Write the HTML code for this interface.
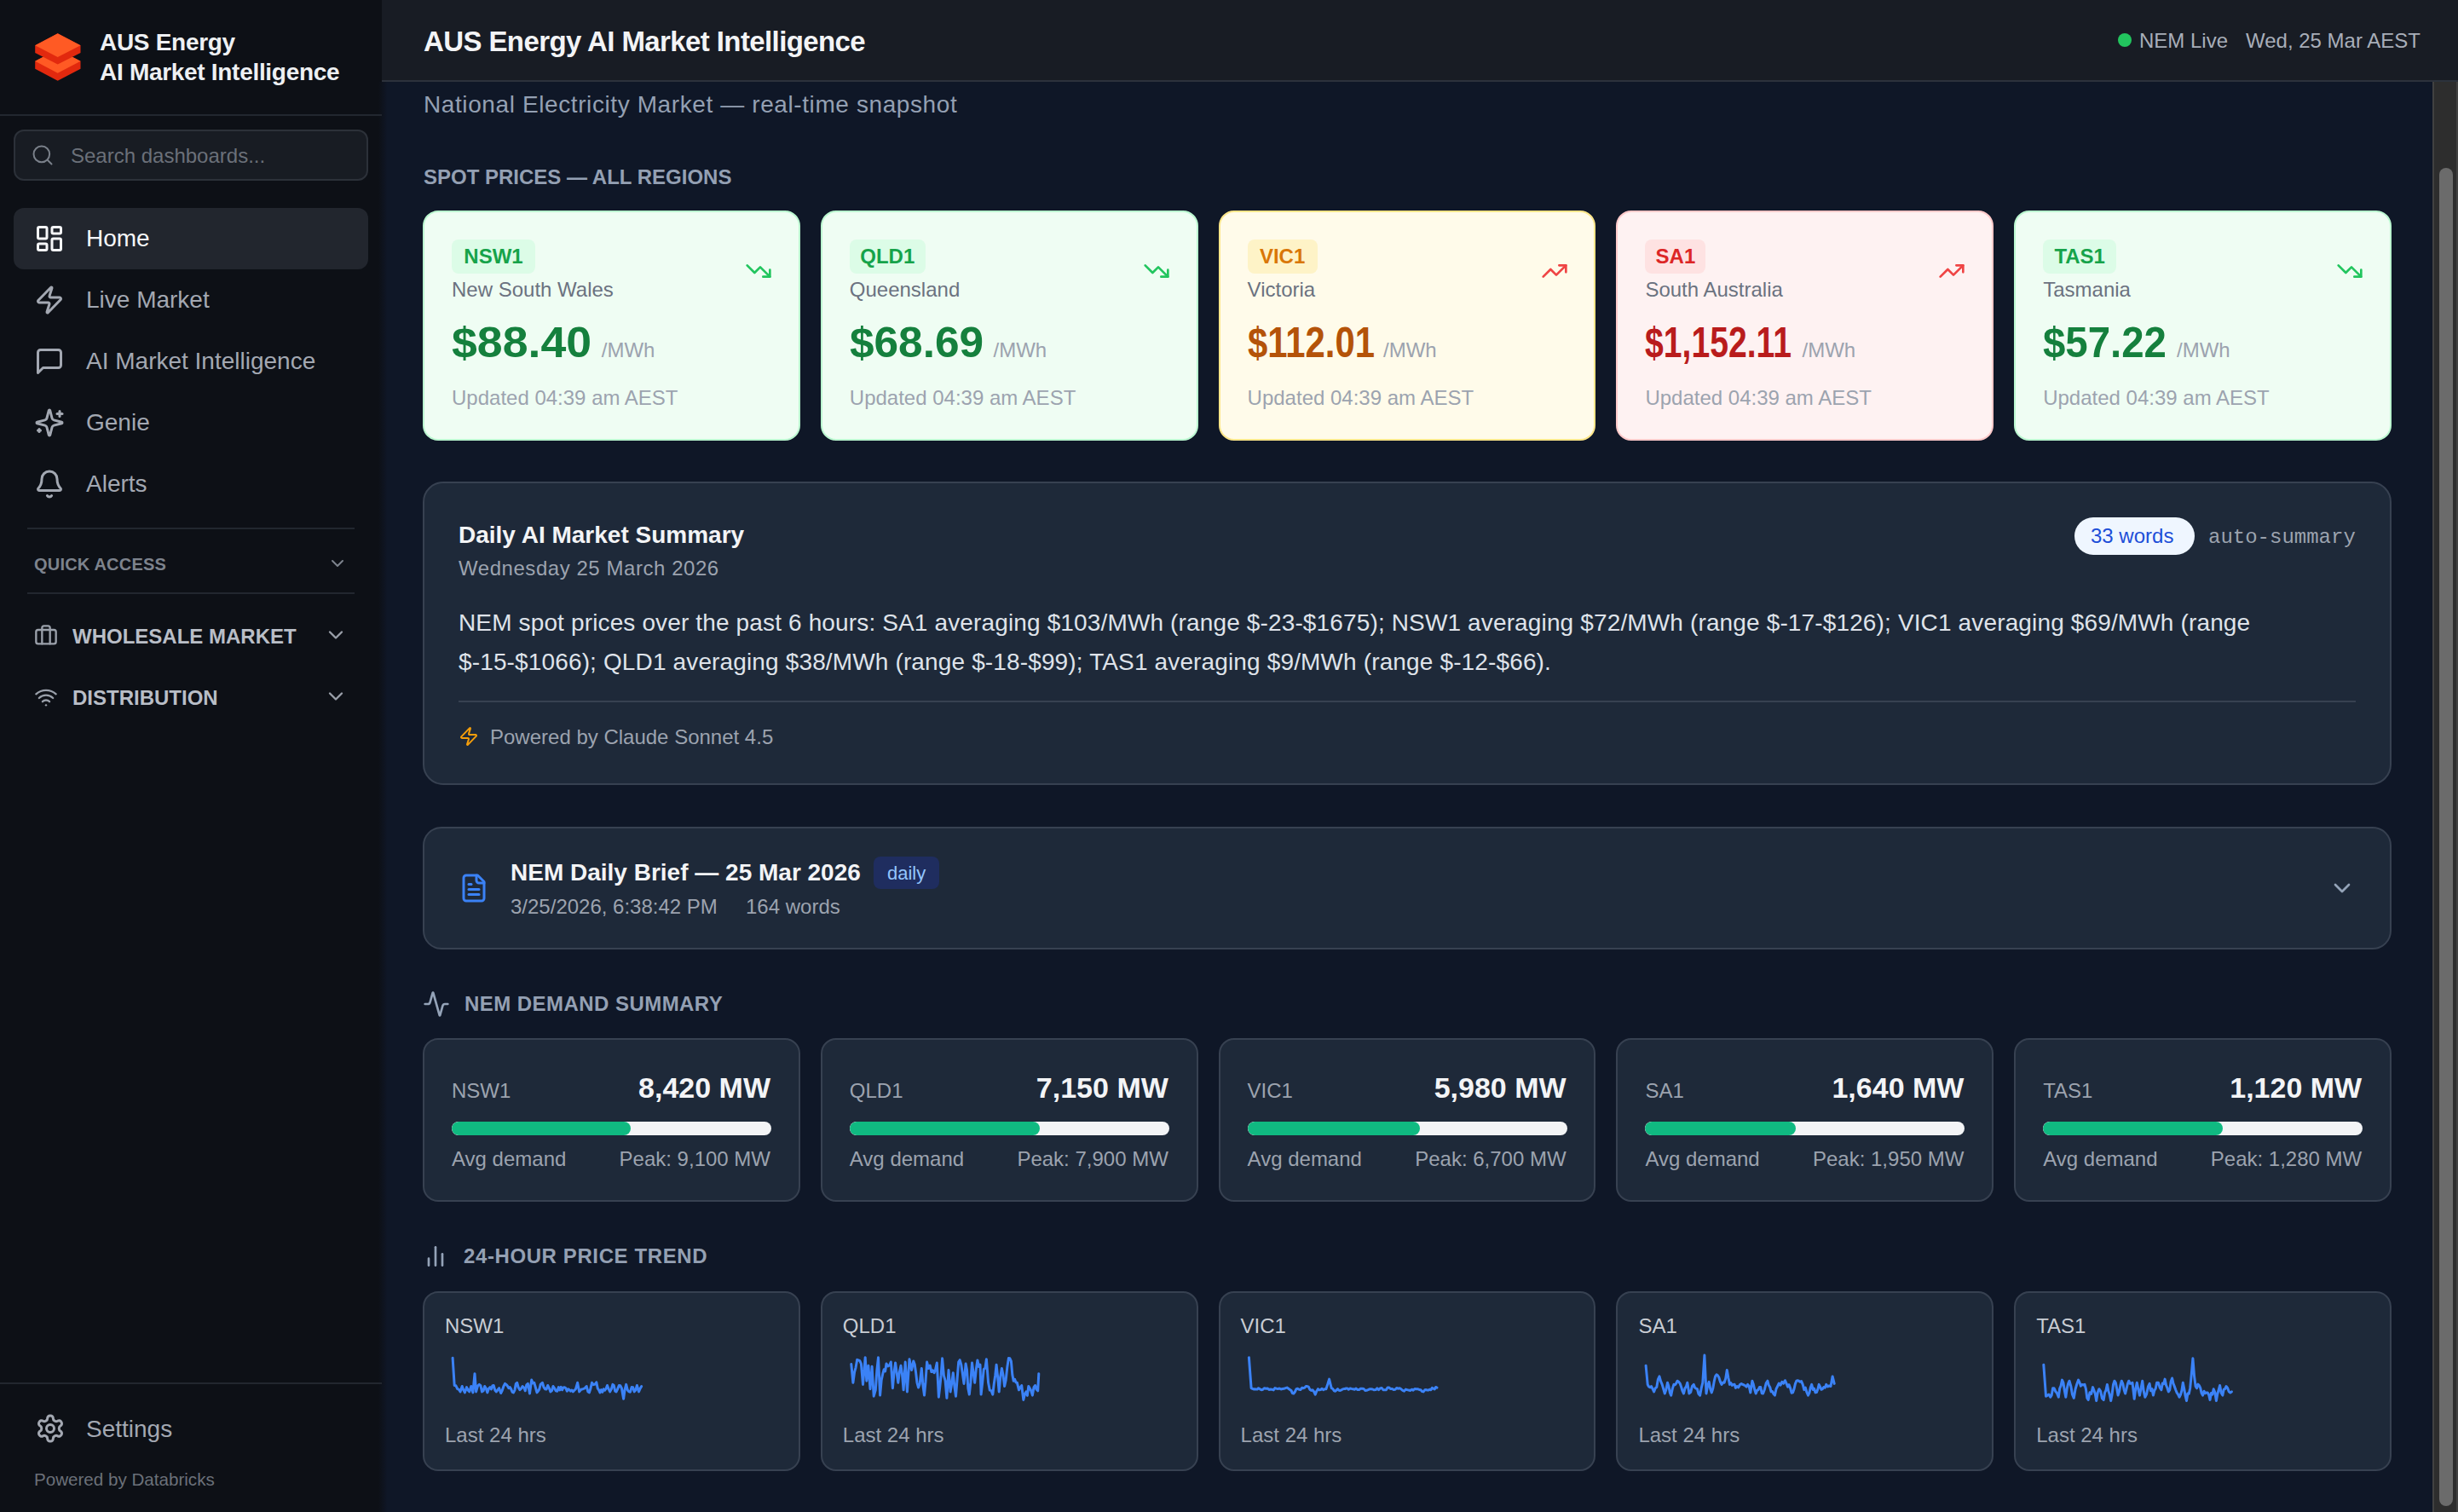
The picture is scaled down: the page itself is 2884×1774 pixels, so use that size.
<!DOCTYPE html>
<html><head><meta charset="utf-8">
<style>
*{box-sizing:border-box;margin:0;padding:0}
html,body{width:2884px;height:1774px;overflow:hidden;background:#0f1727;font-family:"Liberation Sans",sans-serif}
.abs{position:absolute}
.t{position:absolute;white-space:nowrap}
svg.i{position:absolute;fill:none;stroke:currentColor;stroke-linecap:round;stroke-linejoin:round;overflow:visible}
.card{position:absolute;background:#1e2939;border:2px solid #374151;}
</style></head><body>
<div class="abs" style="left:448px;top:96px;width:2406px;height:1678px;background:#0f1727"></div>
<div class="abs" style="left:448px;top:0;width:2436px;height:96px;background:#181c24;border-bottom:2px solid #2c323c"></div>
<div class="t" style="left:497px;top:32px;font-size:33px;line-height:33px;font-weight:700;color:#f3f4f6;letter-spacing:-0.6px">AUS Energy AI Market Intelligence</div>
<div class="abs" style="left:2485px;top:39px;width:16px;height:16px;border-radius:8px;background:#22c55e"></div>
<div class="t" style="left:2510px;top:36px;font-size:24px;line-height:24px;font-weight:400;color:#a8aeb9;">NEM Live</div>
<div class="t" style="left:2635px;top:36px;font-size:24px;line-height:24px;font-weight:400;color:#a8aeb9;">Wed, 25 Mar AEST</div>
<div class="abs" style="left:2854px;top:96px;width:30px;height:1678px;background:#2d2d2d;border-left:2px solid #414141;border-right:2px solid #414141"></div>
<div class="abs" style="left:2862px;top:197px;width:16px;height:1570px;border-radius:8px;background:#6b6b6b"></div>
<div class="abs" style="left:0;top:0;width:448px;height:1774px;background:#0d1016"></div>
<svg class="abs" style="left:0;top:0" width="120" height="120">
<polygon points="41.2,71.8 67.7,57.8 94.5,71.8 94.5,80.8 67.7,94.7 41.2,80.8" fill="#e2290e"/>
<polygon points="41.2,71.8 67.7,57.8 94.5,71.8 67.7,85.7" fill="#ff5a24"/>
<polygon points="41.2,53.3 67.7,39.2 94.5,53.3 94.5,61.9 67.7,75.6 41.2,61.9" fill="#e2290e"/>
<polygon points="41.2,53.3 67.7,39.2 94.5,53.3 67.7,67.1" fill="#ff5a24"/>
</svg>
<div class="abs" style="left:444px;top:96px;width:10px;height:1678px;background:linear-gradient(to right,#0d1016,#0f1626)"></div>
<div class="t" style="left:117px;top:36px;font-size:28px;line-height:28px;font-weight:700;color:#eef0f3;letter-spacing:-0.3px">AUS Energy</div>
<div class="t" style="left:117px;top:71px;font-size:28px;line-height:28px;font-weight:700;color:#eef0f3;letter-spacing:-0.3px">AI Market Intelligence</div>
<div class="abs" style="left:0;top:134px;width:448px;height:2px;background:#22272f"></div>
<div class="abs" style="left:16px;top:152px;width:416px;height:60px;border-radius:12px;background:#181c23;border:2px solid #2c3139"></div>
<svg class="i" style="left:36px;top:168px;color:#7a808a;" width="28" height="28" viewBox="0 0 24 24" stroke-width="1.7"><circle cx="11" cy="11" r="8"/><path d="m21 21-4.3-4.3"/></svg>
<div class="t" style="left:83px;top:171px;font-size:24px;line-height:24px;font-weight:400;color:#6b7079;">Search dashboards...</div>
<div class="abs" style="left:16px;top:244px;width:416px;height:72px;border-radius:12px;background:#22262e"></div>
<svg class="i" style="left:40px;top:262px;color:#f5f6f8;" width="36" height="36" viewBox="0 0 24 24" stroke-width="2"><rect width="7" height="9" x="3" y="3" rx="1"/><rect width="7" height="5" x="14" y="3" rx="1"/><rect width="7" height="9" x="14" y="12" rx="1"/><rect width="7" height="5" x="3" y="16" rx="1"/></svg>
<div class="t" style="left:101px;top:266px;font-size:28px;line-height:28px;font-weight:400;color:#f5f6f8;">Home</div>
<svg class="i" style="left:40px;top:334px;color:#a3a8b2;" width="36" height="36" viewBox="0 0 24 24" stroke-width="2"><path d="M4 14a1 1 0 0 1-.78-1.63l9.9-10.2a.5.5 0 0 1 .86.46l-1.92 6.02A1 1 0 0 0 13 10h7a1 1 0 0 1 .78 1.63l-9.9 10.2a.5.5 0 0 1-.86-.46l1.92-6.02A1 1 0 0 0 11 14z"/></svg>
<div class="t" style="left:101px;top:338px;font-size:28px;line-height:28px;font-weight:400;color:#a3a8b2;">Live Market</div>
<svg class="i" style="left:40px;top:406px;color:#a3a8b2;" width="36" height="36" viewBox="0 0 24 24" stroke-width="2"><path d="M21 15a2 2 0 0 1-2 2H7l-4 4V5a2 2 0 0 1 2-2h14a2 2 0 0 1 2 2z"/></svg>
<div class="t" style="left:101px;top:410px;font-size:28px;line-height:28px;font-weight:400;color:#a3a8b2;">AI Market Intelligence</div>
<svg class="i" style="left:40px;top:478px;color:#a3a8b2;" width="36" height="36" viewBox="0 0 24 24" stroke-width="2"><path d="M9.937 15.5A2 2 0 0 0 8.5 14.063l-6.135-1.582a.5.5 0 0 1 0-.962L8.5 9.936A2 2 0 0 0 9.937 8.5l1.582-6.135a.5.5 0 0 1 .963 0L14.063 8.5A2 2 0 0 0 15.5 9.937l6.135 1.581a.5.5 0 0 1 0 .964L15.5 14.063a2 2 0 0 0-1.437 1.437l-1.582 6.135a.5.5 0 0 1-.963 0z"/><path d="M20 3v4"/><path d="M22 5h-4"/><path d="M4 17v2"/><path d="M5 18H3"/></svg>
<div class="t" style="left:101px;top:482px;font-size:28px;line-height:28px;font-weight:400;color:#a3a8b2;">Genie</div>
<svg class="i" style="left:40px;top:550px;color:#a3a8b2;" width="36" height="36" viewBox="0 0 24 24" stroke-width="2"><path d="M10.268 21a2 2 0 0 0 3.464 0"/><path d="M3.262 15.326A1 1 0 0 0 4 17h16a1 1 0 0 0 .74-1.673C19.41 13.956 18 12.499 18 8A6 6 0 0 0 6 8c0 4.499-1.411 5.956-2.738 7.326"/></svg>
<div class="t" style="left:101px;top:554px;font-size:28px;line-height:28px;font-weight:400;color:#a3a8b2;">Alerts</div>
<div class="abs" style="left:32px;top:619px;width:384px;height:2px;background:#22272f"></div>
<div class="t" style="left:40px;top:652px;font-size:20px;line-height:20px;font-weight:700;color:#7d838d;letter-spacing:0.2px">QUICK ACCESS</div>
<svg class="i" style="left:384px;top:649px;color:#7d838d;" width="24" height="24" viewBox="0 0 24 24" stroke-width="2"><path d="m6 9 6 6 6-6"/></svg>
<div class="abs" style="left:32px;top:695px;width:384px;height:2px;background:#22272f"></div>
<svg class="i" style="left:40px;top:732px;color:#9aa0aa;" width="28" height="28" viewBox="0 0 24 24" stroke-width="2"><path d="M16 20V4a2 2 0 0 0-2-2h-4a2 2 0 0 0-2 2v16"/><rect width="20" height="14" x="2" y="6" rx="2"/></svg>
<div class="t" style="left:85px;top:735px;font-size:24px;line-height:24px;font-weight:700;color:#b9bec7;">WHOLESALE MARKET</div>
<svg class="i" style="left:380px;top:731px;color:#9aa0aa;" width="28" height="28" viewBox="0 0 24 24" stroke-width="2"><path d="m6 9 6 6 6-6"/></svg>
<svg class="i" style="left:40px;top:804px;color:#9aa0aa;" width="28" height="28" viewBox="0 0 24 24" stroke-width="2"><path d="M12 20h.01"/><path d="M2 8.82a15 15 0 0 1 20 0"/><path d="M5 12.859a10 10 0 0 1 14 0"/><path d="M8.5 16.429a5 5 0 0 1 7 0"/></svg>
<div class="t" style="left:85px;top:807px;font-size:24px;line-height:24px;font-weight:700;color:#b9bec7;">DISTRIBUTION</div>
<svg class="i" style="left:380px;top:803px;color:#9aa0aa;" width="28" height="28" viewBox="0 0 24 24" stroke-width="2"><path d="m6 9 6 6 6-6"/></svg>
<div class="abs" style="left:0;top:1622px;width:448px;height:2px;background:#22272f"></div>
<svg class="i" style="left:41px;top:1658px;color:#a3a8b2;" width="36" height="36" viewBox="0 0 24 24" stroke-width="2"><path d="M12.22 2h-.44a2 2 0 0 0-2 2v.18a2 2 0 0 1-1 1.73l-.43.25a2 2 0 0 1-2 0l-.15-.08a2 2 0 0 0-2.73.73l-.22.38a2 2 0 0 0 .73 2.73l.15.1a2 2 0 0 1 1 1.72v.51a2 2 0 0 1-1 1.74l-.15.09a2 2 0 0 0-.73 2.73l.22.38a2 2 0 0 0 2.73.73l.15-.08a2 2 0 0 1 2 0l.43.25a2 2 0 0 1 1 1.73V20a2 2 0 0 0 2 2h.44a2 2 0 0 0 2-2v-.18a2 2 0 0 1 1-1.73l.43-.25a2 2 0 0 1 2 0l.15.08a2 2 0 0 0 2.73-.73l.22-.39a2 2 0 0 0-.73-2.73l-.15-.08a2 2 0 0 1-1-1.74v-.5a2 2 0 0 1 1-1.74l.15-.09a2 2 0 0 0 .73-2.73l-.22-.38a2 2 0 0 0-2.73-.73l-.15.08a2 2 0 0 1-2 0l-.43-.25a2 2 0 0 1-1-1.73V4a2 2 0 0 0-2-2z"/><circle cx="12" cy="12" r="3"/></svg>
<div class="t" style="left:101px;top:1663px;font-size:28px;line-height:28px;font-weight:400;color:#a3a8b2;">Settings</div>
<div class="t" style="left:40px;top:1726px;font-size:20px;line-height:20px;font-weight:400;color:#6b7079;font-size:20.6px">Powered by Databricks</div>
<div class="t" style="left:497px;top:109px;font-size:28px;line-height:28px;font-weight:400;color:#94a0b3;letter-spacing:0.6px">National Electricity Market — real-time snapshot</div>
<div class="t" style="left:497px;top:196px;font-size:24px;line-height:24px;font-weight:700;color:#94a0b3;">SPOT PRICES — ALL REGIONS</div>
<div class="abs" style="left:496.0px;top:247px;width:442.8px;height:270px;border-radius:18px;background:#effdf3;border:2px solid #bbf7d0"></div>
<div class="abs" style="left:530.0px;top:281px;height:40px;width:98px;text-align:center;border-radius:8px;background:#dcfce7;font-size:24px;line-height:40px;font-weight:700;color:#16a34a;white-space:nowrap">NSW1</div>
<div class="t" style="left:530.0px;top:328px;font-size:24px;line-height:24px;font-weight:400;color:#6b7280;">New South Wales</div>
<div class="t" style="left:530.0px;top:377px;font-size:50px;line-height:50px;font-weight:700;color:#15803d;transform:scaleX(1.073);transform-origin:0 0">$88.40</div>
<div class="t" style="left:705.8px;top:399px;font-size:24px;line-height:24px;font-weight:400;color:#9ca3af;">/MWh</div>
<div class="t" style="left:530.0px;top:455px;font-size:24px;line-height:24px;font-weight:400;color:#9ca3af;">Updated 04:39 am AEST</div>
<svg class="i" style="left:874.0px;top:302px;color:#22c55e;" width="32" height="32" viewBox="0 0 24 24" stroke-width="2"><polyline points="22 17 13.5 8.5 8.5 13.5 2 7"/><polyline points="16 17 22 17 22 11"/></svg>
<div class="abs" style="left:962.8px;top:247px;width:442.8px;height:270px;border-radius:18px;background:#effdf3;border:2px solid #bbf7d0"></div>
<div class="abs" style="left:996.8px;top:281px;height:40px;width:89px;text-align:center;border-radius:8px;background:#dcfce7;font-size:24px;line-height:40px;font-weight:700;color:#16a34a;white-space:nowrap">QLD1</div>
<div class="t" style="left:996.8px;top:328px;font-size:24px;line-height:24px;font-weight:400;color:#6b7280;">Queensland</div>
<div class="t" style="left:996.8px;top:377px;font-size:50px;line-height:50px;font-weight:700;color:#15803d;transform:scaleX(1.027);transform-origin:0 0">$68.69</div>
<div class="t" style="left:1165.5px;top:399px;font-size:24px;line-height:24px;font-weight:400;color:#9ca3af;">/MWh</div>
<div class="t" style="left:996.8px;top:455px;font-size:24px;line-height:24px;font-weight:400;color:#9ca3af;">Updated 04:39 am AEST</div>
<svg class="i" style="left:1340.8px;top:302px;color:#22c55e;" width="32" height="32" viewBox="0 0 24 24" stroke-width="2"><polyline points="22 17 13.5 8.5 8.5 13.5 2 7"/><polyline points="16 17 22 17 22 11"/></svg>
<div class="abs" style="left:1429.6px;top:247px;width:442.8px;height:270px;border-radius:18px;background:#fffbea;border:2px solid #fde68a"></div>
<div class="abs" style="left:1463.6px;top:281px;height:40px;width:82px;text-align:center;border-radius:8px;background:#fef3c7;font-size:24px;line-height:40px;font-weight:700;color:#d97706;white-space:nowrap">VIC1</div>
<div class="t" style="left:1463.6px;top:328px;font-size:24px;line-height:24px;font-weight:400;color:#6b7280;">Victoria</div>
<div class="t" style="left:1463.6px;top:377px;font-size:50px;line-height:50px;font-weight:700;color:#b45309;transform:scaleX(0.837);transform-origin:0 0">$112.01</div>
<div class="t" style="left:1623px;top:399px;font-size:24px;line-height:24px;font-weight:400;color:#9ca3af;">/MWh</div>
<div class="t" style="left:1463.6px;top:455px;font-size:24px;line-height:24px;font-weight:400;color:#9ca3af;">Updated 04:39 am AEST</div>
<svg class="i" style="left:1807.6px;top:302px;color:#ef4444;" width="32" height="32" viewBox="0 0 24 24" stroke-width="2"><polyline points="22 7 13.5 15.5 8.5 10.5 2 17"/><polyline points="16 7 22 7 22 13"/></svg>
<div class="abs" style="left:1896.4px;top:247px;width:442.8px;height:270px;border-radius:18px;background:#fef2f2;border:2px solid #fecaca"></div>
<div class="abs" style="left:1930.4px;top:281px;height:40px;width:71px;text-align:center;border-radius:8px;background:#fee2e2;font-size:24px;line-height:40px;font-weight:700;color:#dc2626;white-space:nowrap">SA1</div>
<div class="t" style="left:1930.4px;top:328px;font-size:24px;line-height:24px;font-weight:400;color:#6b7280;">South Australia</div>
<div class="t" style="left:1930.4px;top:377px;font-size:50px;line-height:50px;font-weight:700;color:#b91c1c;transform:scaleX(0.783);transform-origin:0 0">$1,152.11</div>
<div class="t" style="left:2114.5px;top:399px;font-size:24px;line-height:24px;font-weight:400;color:#9ca3af;">/MWh</div>
<div class="t" style="left:1930.4px;top:455px;font-size:24px;line-height:24px;font-weight:400;color:#9ca3af;">Updated 04:39 am AEST</div>
<svg class="i" style="left:2274.4px;top:302px;color:#ef4444;" width="32" height="32" viewBox="0 0 24 24" stroke-width="2"><polyline points="22 7 13.5 15.5 8.5 10.5 2 17"/><polyline points="16 7 22 7 22 13"/></svg>
<div class="abs" style="left:2363.2px;top:247px;width:442.8px;height:270px;border-radius:18px;background:#effdf3;border:2px solid #bbf7d0"></div>
<div class="abs" style="left:2397.2px;top:281px;height:40px;width:86px;text-align:center;border-radius:8px;background:#dcfce7;font-size:24px;line-height:40px;font-weight:700;color:#16a34a;white-space:nowrap">TAS1</div>
<div class="t" style="left:2397.2px;top:328px;font-size:24px;line-height:24px;font-weight:400;color:#6b7280;">Tasmania</div>
<div class="t" style="left:2397.2px;top:377px;font-size:50px;line-height:50px;font-weight:700;color:#15803d;transform:scaleX(0.948);transform-origin:0 0">$57.22</div>
<div class="t" style="left:2554px;top:399px;font-size:24px;line-height:24px;font-weight:400;color:#9ca3af;">/MWh</div>
<div class="t" style="left:2397.2px;top:455px;font-size:24px;line-height:24px;font-weight:400;color:#9ca3af;">Updated 04:39 am AEST</div>
<svg class="i" style="left:2741.2px;top:302px;color:#22c55e;" width="32" height="32" viewBox="0 0 24 24" stroke-width="2"><polyline points="22 17 13.5 8.5 8.5 13.5 2 7"/><polyline points="16 17 22 17 22 11"/></svg>
<div class="card" style="left:496px;top:565px;width:2310px;height:356px;border-radius:24px"></div>
<div class="t" style="left:538px;top:614px;font-size:28px;line-height:28px;font-weight:700;color:#f3f4f6;">Daily AI Market Summary</div>
<div class="t" style="left:538px;top:655px;font-size:24px;line-height:24px;font-weight:400;color:#9ca3af;letter-spacing:0.55px">Wednesday 25 March 2026</div>
<div class="abs" style="left:538px;top:708px;width:2226px;font-size:28px;line-height:46px;letter-spacing:0.14px;color:#dfe3ea">NEM spot prices over the past 6 hours: SA1 averaging $103/MWh (range $-23-$1675); NSW1 averaging $72/MWh (range $-17-$126); VIC1 averaging $69/MWh (range $-15-$1066); QLD1 averaging $38/MWh (range $-18-$99); TAS1 averaging $9/MWh (range $-12-$66).</div>
<div class="abs" style="left:538px;top:822px;width:2226px;height:2px;background:#374151"></div>
<svg class="i" style="left:538px;top:852px;color:#f59e0b;" width="24" height="24" viewBox="0 0 24 24" stroke-width="2"><path d="M4 14a1 1 0 0 1-.78-1.63l9.9-10.2a.5.5 0 0 1 .86.46l-1.92 6.02A1 1 0 0 0 13 10h7a1 1 0 0 1 .78 1.63l-9.9 10.2a.5.5 0 0 1-.86-.46l1.92-6.02A1 1 0 0 0 11 14z"/></svg>
<div class="t" style="left:575px;top:853px;font-size:24px;line-height:24px;font-weight:400;color:#9ca3af;">Powered by Claude Sonnet 4.5</div>
<div class="abs" style="left:2434px;top:607px;width:141px;height:44px;border-radius:22px;background:#eff6ff"></div>
<div class="t" style="left:2453px;top:617px;font-size:24px;line-height:24px;font-weight:400;color:#1d4ed8;">33 words</div>
<div class="t" style="left:2591px;top:619px;font-size:24px;line-height:24px;font-weight:400;color:#9ca3af;font-family:'Liberation Mono',monospace">auto-summary</div>
<div class="card" style="left:496px;top:970px;width:2310px;height:144px;border-radius:22px"></div>
<svg class="i" style="left:537.5px;top:1023.5px;color:#3b82f6;" width="36" height="36" viewBox="0 0 24 24" stroke-width="2"><path d="M15 2H6a2 2 0 0 0-2 2v16a2 2 0 0 0 2 2h12a2 2 0 0 0 2-2V7Z"/><path d="M14 2v4a2 2 0 0 0 2 2h4"/><path d="M10 9H8"/><path d="M16 13H8"/><path d="M16 17H8"/></svg>
<div class="t" style="left:599px;top:1010px;font-size:28px;line-height:28px;font-weight:700;color:#f3f4f6;">NEM Daily Brief — 25 Mar 2026</div>
<div class="abs" style="left:1025px;top:1005px;width:77px;height:38px;border-radius:8px;background:#1f2d5f"></div>
<div class="t" style="left:1041px;top:1014px;font-size:22px;line-height:22px;font-weight:400;color:#93c5fd;">daily</div>
<div class="t" style="left:599px;top:1052px;font-size:24px;line-height:24px;font-weight:400;color:#9ca3af;">3/25/2026, 6:38:42 PM</div>
<div class="t" style="left:875px;top:1052px;font-size:24px;line-height:24px;font-weight:400;color:#9ca3af;">164 words</div>
<svg class="i" style="left:2732px;top:1026px;color:#94a3b8;" width="32" height="32" viewBox="0 0 24 24" stroke-width="2"><path d="m6 9 6 6 6-6"/></svg>
<svg class="i" style="left:496px;top:1162px;color:#94a3b8;" width="32" height="32" viewBox="0 0 24 24" stroke-width="2"><path d="M22 12h-2.48a2 2 0 0 0-1.93 1.46l-2.35 8.36a.25.25 0 0 1-.48 0L9.24 2.18a.25.25 0 0 0-.48 0l-2.35 8.36A2 2 0 0 1 4.49 12H2"/></svg>
<div class="t" style="left:545px;top:1166px;font-size:24px;line-height:24px;font-weight:700;color:#94a0b3;letter-spacing:0.45px">NEM DEMAND SUMMARY</div>
<div class="card" style="left:496.0px;top:1218px;width:442.8px;height:192px;border-radius:18px"></div>
<div class="t" style="left:530.0px;top:1268px;font-size:24px;line-height:24px;font-weight:400;color:#9ca3af;">NSW1</div>
<div class="t" style="right:1980.0px;top:1259px;font-size:34px;line-height:34px;font-weight:700;color:#f3f4f6;">8,420 MW</div>
<div class="abs" style="left:530.0px;top:1316px;width:375px;height:16px;border-radius:8px;background:#f3f4f6;overflow:hidden"><div style="width:55.9%;height:100%;background:#10b981;border-radius:8px"></div></div>
<div class="t" style="left:530.0px;top:1348px;font-size:24px;line-height:24px;font-weight:400;color:#9ca3af;">Avg demand</div>
<div class="t" style="right:1980.0px;top:1348px;font-size:24px;line-height:24px;font-weight:400;color:#9ca3af;">Peak: 9,100 MW</div>
<div class="card" style="left:962.8px;top:1218px;width:442.8px;height:192px;border-radius:18px"></div>
<div class="t" style="left:996.8px;top:1268px;font-size:24px;line-height:24px;font-weight:400;color:#9ca3af;">QLD1</div>
<div class="t" style="right:1513.2px;top:1259px;font-size:34px;line-height:34px;font-weight:700;color:#f3f4f6;">7,150 MW</div>
<div class="abs" style="left:996.8px;top:1316px;width:375px;height:16px;border-radius:8px;background:#f3f4f6;overflow:hidden"><div style="width:59.4%;height:100%;background:#10b981;border-radius:8px"></div></div>
<div class="t" style="left:996.8px;top:1348px;font-size:24px;line-height:24px;font-weight:400;color:#9ca3af;">Avg demand</div>
<div class="t" style="right:1513.2px;top:1348px;font-size:24px;line-height:24px;font-weight:400;color:#9ca3af;">Peak: 7,900 MW</div>
<div class="card" style="left:1429.6px;top:1218px;width:442.8px;height:192px;border-radius:18px"></div>
<div class="t" style="left:1463.6px;top:1268px;font-size:24px;line-height:24px;font-weight:400;color:#9ca3af;">VIC1</div>
<div class="t" style="right:1046.4px;top:1259px;font-size:34px;line-height:34px;font-weight:700;color:#f3f4f6;">5,980 MW</div>
<div class="abs" style="left:1463.6px;top:1316px;width:375px;height:16px;border-radius:8px;background:#f3f4f6;overflow:hidden"><div style="width:54.0%;height:100%;background:#10b981;border-radius:8px"></div></div>
<div class="t" style="left:1463.6px;top:1348px;font-size:24px;line-height:24px;font-weight:400;color:#9ca3af;">Avg demand</div>
<div class="t" style="right:1046.4px;top:1348px;font-size:24px;line-height:24px;font-weight:400;color:#9ca3af;">Peak: 6,700 MW</div>
<div class="card" style="left:1896.4px;top:1218px;width:442.8px;height:192px;border-radius:18px"></div>
<div class="t" style="left:1930.4px;top:1268px;font-size:24px;line-height:24px;font-weight:400;color:#9ca3af;">SA1</div>
<div class="t" style="right:579.5999999999999px;top:1259px;font-size:34px;line-height:34px;font-weight:700;color:#f3f4f6;">1,640 MW</div>
<div class="abs" style="left:1930.4px;top:1316px;width:375px;height:16px;border-radius:8px;background:#f3f4f6;overflow:hidden"><div style="width:47.0%;height:100%;background:#10b981;border-radius:8px"></div></div>
<div class="t" style="left:1930.4px;top:1348px;font-size:24px;line-height:24px;font-weight:400;color:#9ca3af;">Avg demand</div>
<div class="t" style="right:579.5999999999999px;top:1348px;font-size:24px;line-height:24px;font-weight:400;color:#9ca3af;">Peak: 1,950 MW</div>
<div class="card" style="left:2363.2px;top:1218px;width:442.8px;height:192px;border-radius:18px"></div>
<div class="t" style="left:2397.2px;top:1268px;font-size:24px;line-height:24px;font-weight:400;color:#9ca3af;">TAS1</div>
<div class="t" style="right:112.80000000000018px;top:1259px;font-size:34px;line-height:34px;font-weight:700;color:#f3f4f6;">1,120 MW</div>
<div class="abs" style="left:2397.2px;top:1316px;width:375px;height:16px;border-radius:8px;background:#f3f4f6;overflow:hidden"><div style="width:56.1%;height:100%;background:#10b981;border-radius:8px"></div></div>
<div class="t" style="left:2397.2px;top:1348px;font-size:24px;line-height:24px;font-weight:400;color:#9ca3af;">Avg demand</div>
<div class="t" style="right:112.80000000000018px;top:1348px;font-size:24px;line-height:24px;font-weight:400;color:#9ca3af;">Peak: 1,280 MW</div>
<svg class="i" style="left:495px;top:1458px;color:#94a3b8;" width="32" height="32" viewBox="0 0 24 24" stroke-width="2"><line x1="18" x2="18" y1="20" y2="10"/><line x1="12" x2="12" y1="20" y2="4"/><line x1="6" x2="6" y1="20" y2="14"/></svg>
<div class="t" style="left:544px;top:1462px;font-size:24px;line-height:24px;font-weight:700;color:#94a0b3;letter-spacing:0.6px">24-HOUR PRICE TREND</div>
<div class="card" style="left:496.0px;top:1515px;width:442.8px;height:211px;border-radius:18px"></div>
<div class="t" style="left:522.0px;top:1544px;font-size:24px;line-height:24px;font-weight:400;color:#c9cdd4;">NSW1</div>
<svg class="abs" style="left:516.0px;top:1580px;overflow:visible" width="260" height="70"><polyline points="15.1,13.2 17.2,45.5 18.9,45.8 20.7,49.5 22.4,50.3 24.1,52.9 26.2,46.5 27.8,50.9 29.4,53.9 31.5,47.6 33.1,51.0 34.7,52.9 36.8,46.5 38.9,53.9 41.0,31.7 42.6,52.9 44.5,46.0 46.3,44.4 47.9,45.7 49.5,52.9 51.1,51.7 52.7,46.5 54.2,48.8 55.8,53.9 57.4,49.2 59.0,47.6 60.4,49.9 61.8,46.0 63.2,45.5 64.8,51.2 66.4,52.9 68.0,50.6 69.6,48.7 71.7,54.5 73.3,51.3 74.9,46.5 76.5,43.4 78.0,44.4 79.5,46.3 80.9,48.7 82.3,47.6 83.7,49.9 85.1,53.3 86.5,53.9 87.9,51.1 89.3,43.6 90.7,42.3 92.3,48.1 93.9,50.8 95.5,49.2 97.1,46.5 98.7,48.0 100.3,51.8 101.8,44.8 103.4,43.4 105.5,55.0 107.7,39.1 109.2,42.9 110.8,42.3 112.4,48.0 114.0,53.9 115.4,52.1 116.8,49.9 118.2,44.4 120.4,42.3 121.9,47.3 123.5,49.7 125.1,50.1 126.7,45.5 128.3,48.6 129.9,52.9 131.5,51.5 133.0,46.5 134.6,48.9 136.2,51.8 137.8,52.3 139.4,47.6 140.8,50.9 142.2,47.3 143.6,50.8 145.0,47.9 146.4,47.7 147.9,48.7 149.3,52.2 150.7,49.7 152.1,50.8 153.5,52.2 154.9,51.0 156.3,52.9 157.9,51.3 159.5,49.7 161.6,42.3 163.7,52.9 165.1,51.1 166.5,49.9 168.0,49.7 169.4,49.2 170.8,48.1 172.2,46.5 173.8,52.7 175.4,53.9 176.9,49.2 178.5,42.3 180.3,44.7 182.1,44.1 183.8,41.8 185.2,48.8 186.6,50.9 188.0,53.9 189.5,50.5 190.9,53.3 192.3,49.7 193.7,51.1 195.1,49.3 196.5,45.5 198.1,49.6 199.7,52.9 201.3,49.9 202.9,44.4 204.3,45.5 205.7,52.1 207.1,52.9 208.7,49.6 210.3,45.5 211.8,45.8 213.4,48.7 215.6,61.3 217.1,50.3 218.7,44.4 220.3,50.8 221.9,52.9 223.5,53.2 225.1,47.6 226.7,47.8 228.2,52.9 229.8,51.0 231.4,45.5 233.5,52.9 235.1,49.2 236.7,46.5" fill="none" stroke="#3b82f6" stroke-width="3" stroke-linejoin="round" stroke-linecap="round"/></svg>
<div class="t" style="left:522.0px;top:1672px;font-size:24px;line-height:24px;font-weight:400;color:#9ca3af;">Last 24 hrs</div>
<div class="card" style="left:962.8px;top:1515px;width:442.8px;height:211px;border-radius:18px"></div>
<div class="t" style="left:988.8px;top:1544px;font-size:24px;line-height:24px;font-weight:400;color:#c9cdd4;">QLD1</div>
<svg class="abs" style="left:982.8px;top:1580px;overflow:visible" width="260" height="70"><polyline points="15.8,20.6 17.9,42.3 19.5,30.2 21.1,24.3 22.7,15.3 24.2,15.9 25.8,16.7 27.4,20.1 29.5,44.4 32.2,12.7 33.8,40.2 35.9,22.2 38.0,49.7 40.1,23.3 42.2,58.2 44.3,50.8 45.9,27.6 47.5,12.7 49.6,57.1 51.2,39.2 52.8,31.7 54.2,26.7 55.6,29.0 57.0,20.1 58.8,23.0 60.6,21.9 62.3,18.0 64.4,48.7 66.0,30.5 67.6,19.0 69.2,31.1 70.8,42.3 72.4,29.6 74.0,22.2 75.5,32.6 77.1,50.8 79.2,18.0 81.4,52.9 84.0,14.8 86.6,27.5 88.8,16.9 90.2,20.7 91.6,30.4 93.0,42.3 94.6,48.0 96.2,43.4 98.3,25.4 99.9,45.2 101.5,57.1 103.0,41.2 104.6,18.0 106.4,25.5 108.2,22.1 109.9,29.6 111.5,27.9 113.1,30.7 114.7,26.4 116.3,19.0 118.4,59.2 119.8,46.9 121.2,33.2 122.6,13.8 124.4,33.8 126.1,39.8 127.9,60.3 130.0,27.5 132.1,52.9 133.7,43.1 135.3,30.7 136.9,46.5 138.5,58.2 140.1,38.2 141.7,18.0 143.2,15.7 144.8,21.2 146.4,31.9 148.0,43.4 150.1,20.1 151.5,27.2 152.9,49.3 154.3,56.1 155.9,41.9 157.5,19.0 159.1,31.2 160.7,42.3 162.3,26.7 163.9,15.9 165.4,23.4 167.0,21.2 168.1,56.1 169.7,42.1 171.3,26.4 172.9,25.2 174.4,14.8 176.6,42.3 178.3,51.1 180.1,51.6 181.8,56.1 183.3,43.4 184.7,34.0 186.1,21.2 187.7,36.2 189.2,52.9 190.8,35.1 192.4,25.4 194.0,33.6 195.6,46.5 197.2,39.2 198.8,24.3 200.4,13.6 201.9,13.8 203.4,17.1 204.8,32.9 206.2,40.2 207.6,38.3 209.0,42.0 210.4,42.3 212.5,50.8 214.1,47.8 215.7,45.5 217.8,62.4 219.4,55.8 221.0,52.9 222.4,57.4 223.8,46.4 225.2,48.7 226.8,51.8 228.4,57.1 230.0,47.7 231.6,45.5 233.1,50.2 234.7,51.8 235.8,31.7" fill="none" stroke="#3b82f6" stroke-width="3" stroke-linejoin="round" stroke-linecap="round"/></svg>
<div class="t" style="left:988.8px;top:1672px;font-size:24px;line-height:24px;font-weight:400;color:#9ca3af;">Last 24 hrs</div>
<div class="card" style="left:1429.6px;top:1515px;width:442.8px;height:211px;border-radius:18px"></div>
<div class="t" style="left:1455.6px;top:1544px;font-size:24px;line-height:24px;font-weight:400;color:#c9cdd4;">VIC1</div>
<svg class="abs" style="left:1449.6px;top:1580px;overflow:visible" width="260" height="70"><polyline points="15.4,12.7 18.1,48.7 19.5,49.3 20.9,49.9 22.3,49.7 23.7,50.1 25.1,50.1 26.6,48.7 28.3,49.8 30.1,50.7 31.8,50.2 33.6,48.7 35.4,49.2 37.1,48.9 38.9,50.4 40.7,50.1 42.4,50.2 44.2,50.9 45.9,48.6 47.7,49.2 49.5,49.4 51.2,49.1 53.0,49.9 54.8,49.6 56.5,49.3 58.3,48.7 60.1,48.1 61.8,49.2 63.6,50.6 65.0,51.5 66.4,54.5 67.8,55.0 69.4,53.0 71.0,49.7 72.6,49.2 74.2,50.2 75.9,50.4 77.7,48.3 79.4,48.7 80.9,48.2 82.3,46.4 83.7,46.5 85.3,47.2 86.8,50.2 88.4,51.4 90.0,50.8 91.6,52.7 93.2,56.1 94.8,52.2 96.4,49.7 98.0,50.9 99.5,50.6 101.1,49.2 102.7,50.8 104.3,49.8 105.9,49.7 107.7,44.3 109.6,38.1 112.2,48.7 113.8,49.5 115.4,51.8 116.8,52.2 118.2,50.9 119.6,49.7 121.0,51.2 122.5,51.4 123.9,50.8 125.3,49.9 126.7,49.6 128.1,49.5 129.5,48.9 130.9,49.1 132.3,50.2 134.1,49.0 135.9,49.4 137.6,49.7 139.4,50.2 141.1,49.1 142.9,50.6 144.7,50.5 146.4,49.3 148.2,49.2 150.0,49.4 151.7,51.4 153.5,51.3 155.2,50.7 157.0,49.8 158.8,49.7 160.5,50.0 162.3,50.8 164.1,50.6 165.8,48.9 167.6,50.6 169.4,48.9 171.1,48.4 172.9,50.7 174.6,50.8 176.4,50.7 178.2,47.9 179.9,48.1 181.7,49.6 183.5,49.4 185.2,50.6 187.0,50.3 188.7,48.5 190.5,49.2 192.3,48.8 194.0,49.8 195.8,51.3 197.6,52.1 199.3,50.1 201.1,50.6 202.8,51.1 204.6,51.4 206.4,50.2 208.1,51.1 209.9,49.5 211.7,49.7 213.4,49.7 215.2,50.5 217.0,50.8 218.5,52.5 220.1,52.9 221.7,50.8 223.3,50.6 224.7,51.1 226.1,51.1 227.5,50.2 228.9,50.8 230.3,48.4 231.8,49.2 233.2,49.9 234.6,47.5 236.0,48.1" fill="none" stroke="#3b82f6" stroke-width="3" stroke-linejoin="round" stroke-linecap="round"/></svg>
<div class="t" style="left:1455.6px;top:1672px;font-size:24px;line-height:24px;font-weight:400;color:#9ca3af;">Last 24 hrs</div>
<div class="card" style="left:1896.4px;top:1515px;width:442.8px;height:211px;border-radius:18px"></div>
<div class="t" style="left:1922.4px;top:1544px;font-size:24px;line-height:24px;font-weight:400;color:#c9cdd4;">SA1</div>
<svg class="abs" style="left:1916.4px;top:1580px;overflow:visible" width="260" height="70"><polyline points="15.1,22.2 17.2,44.4 18.6,46.9 20.1,47.8 21.5,46.5 23.1,49.6 24.6,52.9 26.2,48.8 27.8,47.6 29.4,38.3 31.0,34.9 32.6,40.6 34.2,44.4 35.7,49.5 37.3,55.0 38.9,50.2 40.5,42.3 41.9,46.5 43.3,53.8 44.7,57.1 46.3,49.4 47.9,44.4 49.3,44.8 50.7,43.0 52.1,40.2 53.7,41.3 55.3,43.4 56.7,47.5 58.1,52.2 59.5,55.0 61.0,48.9 62.4,46.9 63.8,42.3 65.9,55.0 67.7,53.3 69.4,46.5 71.2,44.4 72.6,48.0 74.0,49.1 75.4,49.7 77.0,55.5 78.6,57.1 80.2,48.7 81.8,42.3 83.9,10.0 86.0,55.0 87.6,45.7 89.2,41.3 90.7,49.4 92.3,53.9 93.7,49.4 95.2,40.9 96.6,34.9 98.0,32.8 99.4,33.8 100.8,36.0 102.4,41.0 104.0,44.4 105.6,42.1 107.1,42.3 108.7,37.6 110.3,27.5 111.9,36.5 113.5,44.4 114.9,42.6 116.3,45.4 117.7,44.4 119.1,44.3 120.5,48.4 122.0,46.5 123.7,47.9 125.5,44.5 127.2,43.4 128.7,44.4 130.2,45.0 131.7,45.8 133.2,47.1 134.6,44.4 136.2,46.4 137.8,53.9 139.9,40.2 141.3,44.3 142.8,50.7 144.2,55.0 145.6,51.4 147.0,50.6 148.4,47.6 149.8,47.6 151.2,54.8 152.6,55.0 154.4,50.2 156.2,42.8 157.9,40.2 159.3,45.4 160.7,47.5 162.1,52.9 163.6,52.5 165.0,55.6 166.4,57.1 168.0,49.7 169.6,46.5 171.3,43.0 173.1,45.2 174.8,41.3 176.6,43.1 178.4,39.7 180.1,43.4 181.6,47.2 183.1,44.7 184.6,48.7 186.1,54.3 187.5,53.9 188.9,50.1 190.4,43.6 191.8,40.2 193.2,39.8 194.6,40.2 196.0,41.3 197.6,40.6 199.2,44.4 200.8,50.6 202.3,48.1 203.9,53.5 205.5,57.1 206.9,54.4 208.3,48.0 209.7,44.4 211.2,50.5 212.6,49.2 214.0,53.9 215.4,53.6 216.8,50.0 218.2,44.4 219.6,47.2 221.0,50.3 222.4,49.7 223.8,47.6 225.3,48.2 226.7,44.4 228.4,46.9 230.2,45.9 232.0,46.5 234.1,34.9 236.2,43.4" fill="none" stroke="#3b82f6" stroke-width="3" stroke-linejoin="round" stroke-linecap="round"/></svg>
<div class="t" style="left:1922.4px;top:1672px;font-size:24px;line-height:24px;font-weight:400;color:#9ca3af;">Last 24 hrs</div>
<div class="card" style="left:2363.2px;top:1515px;width:442.8px;height:211px;border-radius:18px"></div>
<div class="t" style="left:2389.2px;top:1544px;font-size:24px;line-height:24px;font-weight:400;color:#c9cdd4;">TAS1</div>
<svg class="abs" style="left:2383.2px;top:1580px;overflow:visible" width="260" height="70"><polyline points="14.8,21.2 17.5,58.2 19.3,57.1 21.0,56.1 22.8,59.2 24.2,56.9 25.6,48.8 27.0,48.7 28.8,52.5 30.5,54.6 32.3,59.2 33.7,49.0 35.1,45.9 36.5,39.1 37.9,42.1 39.4,52.0 40.8,59.2 42.2,49.4 43.6,43.3 45.0,40.2 46.8,46.3 48.5,56.2 50.3,60.3 52.0,50.2 53.8,44.0 55.6,39.1 57.0,41.9 58.4,46.2 59.8,44.4 61.4,45.0 63.0,44.4 64.4,49.6 65.8,60.2 67.2,62.4 69.0,53.8 70.7,55.4 72.5,47.6 73.9,51.2 75.3,55.3 76.7,63.5 78.3,53.5 79.9,49.7 81.7,52.4 83.4,60.7 85.2,62.4 86.6,53.9 88.0,51.1 89.4,44.4 90.8,51.9 92.2,56.1 93.7,63.5 95.1,56.1 96.5,44.5 97.9,40.2 99.3,42.3 100.7,49.1 102.1,57.1 103.5,52.9 104.9,45.3 106.3,40.2 107.8,43.6 109.2,50.8 110.6,55.0 112.0,49.7 113.4,43.5 114.8,40.2 116.2,43.3 117.6,43.2 119.0,42.3 121.2,61.3 122.7,49.8 124.3,42.3 125.9,50.3 127.5,57.1 129.1,48.9 130.7,40.2 132.3,52.7 133.8,59.2 135.6,55.8 137.4,47.0 139.1,43.4 140.5,51.8 142.0,49.5 143.4,57.1 144.8,51.5 146.2,49.3 147.6,42.3 149.4,42.3 151.1,47.9 152.9,50.8 154.3,42.9 155.7,43.7 157.1,38.1 158.5,45.1 159.9,48.5 161.3,52.9 162.8,50.6 164.2,40.8 165.6,37.0 167.0,43.2 168.4,46.9 169.8,50.8 171.2,54.2 172.6,56.1 174.0,59.2 175.5,56.3 176.9,51.5 178.3,42.3 179.7,49.2 181.1,57.7 182.5,63.5 183.9,55.0 185.3,55.2 186.7,48.7 188.3,32.4 189.9,13.8 191.5,34.1 193.1,46.5 194.5,48.8 195.9,44.1 197.3,45.5 198.7,48.4 200.1,54.6 201.5,57.1 203.0,52.2 204.4,54.7 205.8,53.9 207.2,54.1 208.6,56.5 210.0,62.4 211.4,54.6 212.8,56.1 214.2,49.7 215.8,53.6 217.4,63.5 218.8,55.5 220.2,50.6 221.6,45.5 223.2,54.3 224.8,57.1 226.2,50.2 227.6,49.7 229.0,46.5 230.6,48.5 232.2,52.8 233.8,53.9 235.4,52.9" fill="none" stroke="#3b82f6" stroke-width="3" stroke-linejoin="round" stroke-linecap="round"/></svg>
<div class="t" style="left:2389.2px;top:1672px;font-size:24px;line-height:24px;font-weight:400;color:#9ca3af;">Last 24 hrs</div>
</body></html>
